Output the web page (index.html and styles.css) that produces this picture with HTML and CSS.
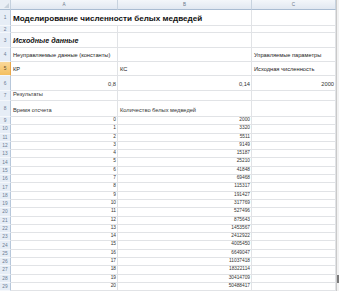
FILE: index.html
```html
<!DOCTYPE html>
<html lang="ru">
<head>
<meta charset="utf-8">
<title>Моделирование численности белых медведей</title>
<link rel="stylesheet" href="styles.css">
</head>
<body>
<div class="sheet">
  <div class="row r-head">
    <div class="corner"><span class="tri"></span></div>
    <div class="colhead">A</div>
    <div class="colhead">B</div>
    <div class="colhead">C</div>
    <div class="edge"></div>
  </div>
  <div class="row r1">
    <div class="rh">1</div>
    <div class="cell span2 title">Моделирование численности белых медведей</div>
    <div class="cell"></div>
    <div class="edge"></div>
  </div>
  <div class="row r2">
    <div class="rh">2</div>
    <div class="cell"></div><div class="cell"></div><div class="cell"></div>
    <div class="edge"></div>
  </div>
  <div class="row r3">
    <div class="rh">3</div>
    <div class="cell sub">Исходные данные</div><div class="cell"></div><div class="cell"></div>
    <div class="edge"></div>
  </div>
  <div class="row r4">
    <div class="rh">4</div>
    <div class="cell txt b">Неуправляемые данные (константы)</div><div class="cell"></div><div class="cell txt b">Управляемые параметры</div>
    <div class="edge"></div>
  </div>
  <div class="row r5">
    <div class="rh sel">5</div>
    <div class="cell txt b">КР</div><div class="cell txt b">КС</div><div class="cell txt b">Исходная численность</div>
    <div class="edge"></div>
  </div>
  <div class="row r6">
    <div class="rh">6</div>
    <div class="cell txt num">0,8</div><div class="cell txt num">0,14</div><div class="cell txt num">2000</div>
    <div class="edge"></div>
  </div>
  <div class="row r7">
    <div class="rh">7</div>
    <div class="cell txt">Результаты</div><div class="cell"></div><div class="cell"></div>
    <div class="edge"></div>
  </div>
  <div class="row r8">
    <div class="rh">8</div>
    <div class="cell txt">Время отсчета</div><div class="cell txt">Количество белых медведей</div><div class="cell"></div>
    <div class="edge"></div>
  </div>
  <div class="row rd"><div class="rh">9</div><div class="cell txt num">0</div><div class="cell txt num">2000</div><div class="cell"></div><div class="edge"></div></div>
  <div class="row rd"><div class="rh">10</div><div class="cell txt num">1</div><div class="cell txt num">3320</div><div class="cell"></div><div class="edge"></div></div>
  <div class="row rd"><div class="rh">11</div><div class="cell txt num">2</div><div class="cell txt num">5511</div><div class="cell"></div><div class="edge"></div></div>
  <div class="row rd"><div class="rh">12</div><div class="cell txt num">3</div><div class="cell txt num">9149</div><div class="cell"></div><div class="edge"></div></div>
  <div class="row rd"><div class="rh">13</div><div class="cell txt num">4</div><div class="cell txt num">15187</div><div class="cell"></div><div class="edge"></div></div>
  <div class="row rd"><div class="rh">14</div><div class="cell txt num">5</div><div class="cell txt num">25210</div><div class="cell"></div><div class="edge"></div></div>
  <div class="row rd"><div class="rh">15</div><div class="cell txt num">6</div><div class="cell txt num">41848</div><div class="cell"></div><div class="edge"></div></div>
  <div class="row rd"><div class="rh">16</div><div class="cell txt num">7</div><div class="cell txt num">69468</div><div class="cell"></div><div class="edge"></div></div>
  <div class="row rd"><div class="rh">17</div><div class="cell txt num">8</div><div class="cell txt num">115317</div><div class="cell"></div><div class="edge"></div></div>
  <div class="row rd"><div class="rh">18</div><div class="cell txt num">9</div><div class="cell txt num">191427</div><div class="cell"></div><div class="edge"></div></div>
  <div class="row rd"><div class="rh">19</div><div class="cell txt num">10</div><div class="cell txt num">317769</div><div class="cell"></div><div class="edge"></div></div>
  <div class="row rd"><div class="rh">20</div><div class="cell txt num">11</div><div class="cell txt num">527496</div><div class="cell"></div><div class="edge"></div></div>
  <div class="row rd"><div class="rh">21</div><div class="cell txt num">12</div><div class="cell txt num">875643</div><div class="cell"></div><div class="edge"></div></div>
  <div class="row rd"><div class="rh">22</div><div class="cell txt num">13</div><div class="cell txt num">1453567</div><div class="cell"></div><div class="edge"></div></div>
  <div class="row rd"><div class="rh">23</div><div class="cell txt num">14</div><div class="cell txt num">2412922</div><div class="cell"></div><div class="edge"></div></div>
  <div class="row rd"><div class="rh">24</div><div class="cell txt num">15</div><div class="cell txt num">4005450</div><div class="cell"></div><div class="edge"></div></div>
  <div class="row rd"><div class="rh">25</div><div class="cell txt num">16</div><div class="cell txt num">6649047</div><div class="cell"></div><div class="edge"></div></div>
  <div class="row rd"><div class="rh">26</div><div class="cell txt num">17</div><div class="cell txt num">11037418</div><div class="cell"></div><div class="edge"></div></div>
  <div class="row rd"><div class="rh">27</div><div class="cell txt num">18</div><div class="cell txt num">18322114</div><div class="cell"></div><div class="edge"></div></div>
  <div class="row rd"><div class="rh">28</div><div class="cell txt num">19</div><div class="cell txt num">30414709</div><div class="cell"></div><div class="edge thumb"></div></div>
  <div class="row rd"><div class="rh">29</div><div class="cell txt num">20</div><div class="cell txt num">50488417</div><div class="cell"></div><div class="edge"></div></div>
</div>
</body>
</html>
```
FILE: styles.css
```css
html, body {
  margin: 0;
  padding: 0;
  background: #ffffff;
  overflow: hidden;
}

.sheet {
  width: 339px;
  font-family: "Liberation Sans", "DejaVu Sans", sans-serif;
  color: #2b2b2b;
}

.row {
  display: grid;
  grid-template-columns: 11px 107px 134px 84px 3px;
  box-sizing: border-box;
}

.r-head { height: 10px; }
.r1 { height: 16px; }
.r2 { height: 7px; }
.r3 { height: 15px; }
.r4 { height: 14px; }
.r5 { height: 14px; }
.r6 { height: 15px; }
.r7 { height: 10px; }
.r8 { height: 16px; }
.rd { height: 8.3px; }

.corner {
  position: relative;
  background: #e9eef5;
  border-right: 1px solid #c5d1de;
  border-bottom: 1px solid #a9bcd2;
  box-sizing: border-box;
}
.tri {
  position: absolute;
  right: 1px;
  bottom: 1px;
  width: 0;
  height: 0;
  border-left: 5px solid transparent;
  border-bottom: 5px solid #c9d2dc;
}

.colhead {
  background: linear-gradient(#f3f6fa, #e1e8f1);
  border-right: 1px solid #c8d3df;
  border-bottom: 1px solid #a9bcd2;
  box-sizing: border-box;
  font-size: 4.6px;
  color: #6d7a8a;
  display: flex;
  align-items: center;
  justify-content: center;
}

.rh {
  background: #e6edf6;
  border-right: 1px solid #b7c7da;
  border-bottom: 1px solid #f4f7fb;
  box-sizing: border-box;
  font-size: 4.8px;
  color: #6a7b93;
  display: flex;
  align-items: center;
  justify-content: center;
  overflow: hidden;
}
.rh.sel {
  background: linear-gradient(#f9d89a, #f4bf5f);
  border-right-color: #e8a74a;
  color: #5c4a2a;
}

.cell {
  border-right: 1px solid #e1e3e6;
  border-bottom: 1px solid #e1e3e6;
  box-sizing: border-box;
  display: flex;
  align-items: flex-end;
  padding: 0 1px 2px 2px;
  white-space: nowrap;
  overflow: visible;
  min-width: 0;
}
.span2 { grid-column: span 2; }

.edge {
  background: #f2f2f2;
  border-left: 1px solid #c9c9c9;
  box-sizing: border-box;
}
.edge.thumb { background: #7a7a7a; }

.title {
  font-size: 8.1px;
  font-weight: bold;
  color: #111;
  padding-bottom: 2px;
}
.sub {
  font-size: 7.2px;
  font-weight: bold;
  font-style: italic;
  color: #111;
  padding-bottom: 2px;
}
.txt {
  font-size: 5.7px;
  line-height: 1;
  color: #333;
}
.txt.b { color: #222; }
.num {
  justify-content: flex-end;
  padding-right: 1px;
}
.rd .txt { padding-bottom: 1.5px; font-size: 4.8px; }
```
